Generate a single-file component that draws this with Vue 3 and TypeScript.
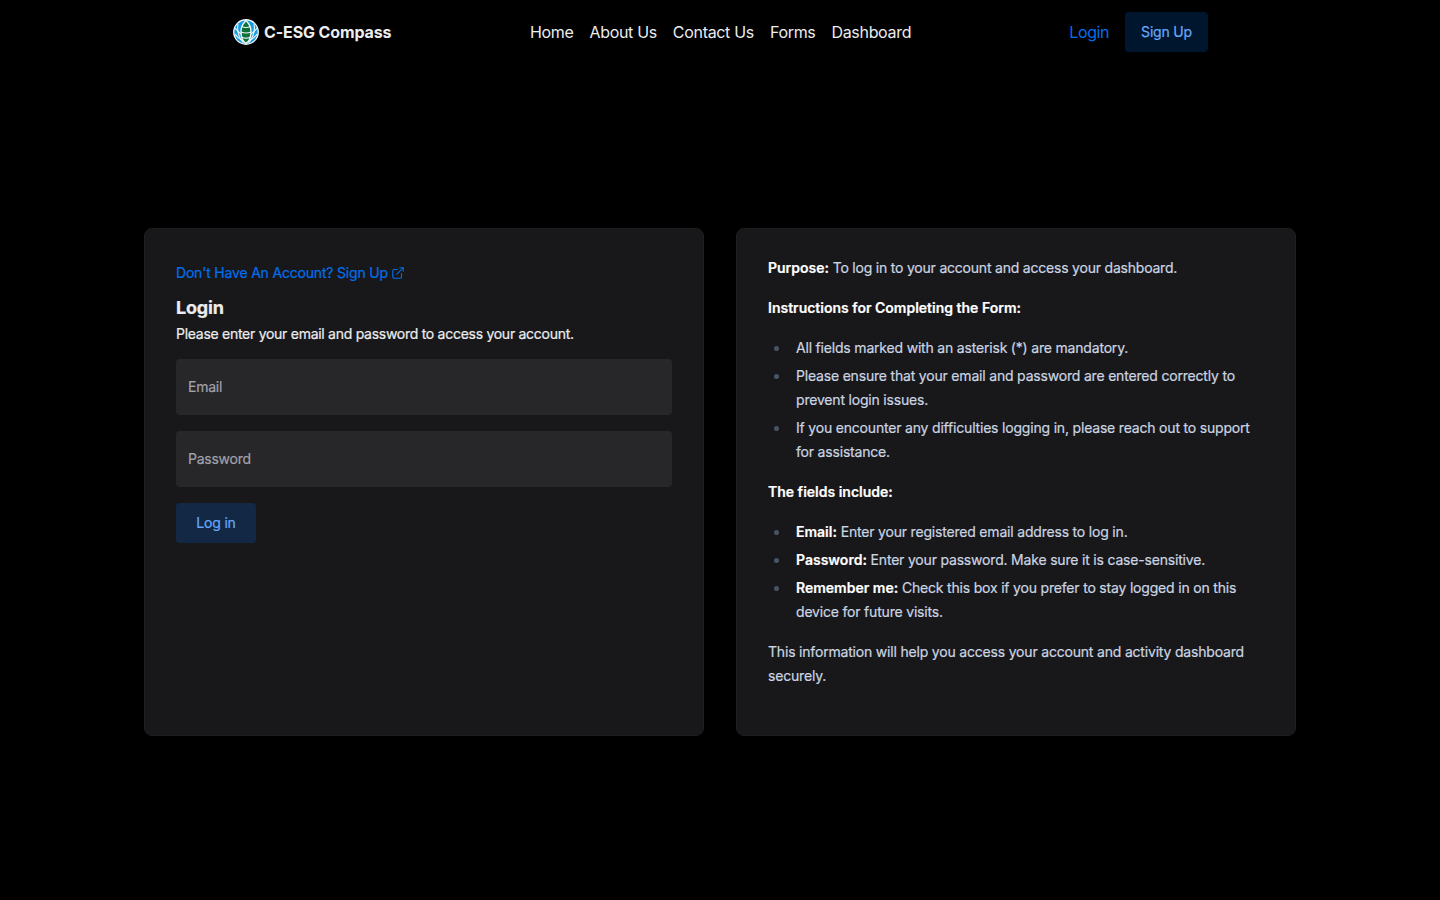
<script setup lang="ts">
import { ref } from 'vue'

interface Item {
  term?: string
  text: string
}

const links: string[] = ['Home', 'About Us', 'Contact Us', 'Forms', 'Dashboard']

const instructions: Item[] = [
  { text: 'All fields marked with an asterisk (*) are mandatory.' },
  { text: 'Please ensure that your email and password are entered correctly to prevent login issues.' },
  { text: 'If you encounter any difficulties logging in, please reach out to support for assistance.' },
]

const fields: Item[] = [
  { term: 'Email:', text: 'Enter your registered email address to log in.' },
  { term: 'Password:', text: 'Enter your password. Make sure it is case-sensitive.' },
  { term: 'Remember me:', text: 'Check this box if you prefer to stay logged in on this device for future visits.' },
]

const email = ref('')
const password = ref('')
</script>

<template>
  <div class="page">
    <nav class="nav">
      <header class="bar">
        <div class="brand">
          <svg class="logo" viewBox="0 0 26 26" aria-hidden="true">
            <circle cx="13" cy="13" r="12.9" fill="#f4f7f8" />
            <circle cx="13" cy="13" r="11.6" fill="#169be0" />
            <g fill="none" stroke="#f4f7f8" stroke-width="1.1">
              <path d="M1.5 8.5C4 12 6 14 9 15.4M24.5 8.5C22 12 20 14 17 15.4" />
              <path d="M2 15C4 18.2 7 20.4 10 21.5M24 15C22 18.2 19 20.4 16 21.5" />
              <path d="M5 5.2C3.8 11 5.3 17.5 10.5 24M21 5.2C22.2 11 20.7 17.5 15.5 24" />
            </g>
            <path
              d="M13 1.2C12 3.6 8 5.2 8 12.5C8 18 9.6 22.3 13 24.4C16.4 22.3 18 18 18 12.5C18 5.2 14 3.6 13 1.2Z"
              fill="#0b7138"
              stroke="#f4f7f8"
              stroke-width="1.3"
            />
            <path
              d="M8.5 7.6Q13 9.4 17.5 7.6M8 12.9Q13 15 18 12.9M8.8 18.2Q13 20 17.2 18.2"
              fill="none"
              stroke="#f4f7f8"
              stroke-width="1.1"
            />
          </svg>
          <p class="brand-name">C-ESG Compass</p>
        </div>
        <ul class="links">
          <li v-for="link in links" :key="link">{{ link }}</li>
        </ul>
        <div class="actions">
          <a class="login-link">Login</a>
          <a class="button signup">Sign Up</a>
        </div>
      </header>
    </nav>

    <main class="content">
      <section class="card form-card">
        <a class="account-link">
          Don't Have An Account? Sign Up
          <svg class="external" viewBox="0 0 24 24" aria-hidden="true">
            <path d="M18 13v6a2 2 0 0 1-2 2H5a2 2 0 0 1-2-2V8a2 2 0 0 1 2-2h6" />
            <path d="M15 3h6v6" />
            <path d="M10 14 21 3" />
          </svg>
        </a>
        <h1>Login</h1>
        <p class="lead">Please enter your email and password to access your account.</p>
        <form @submit.prevent>
          <input v-model="email" class="field" type="email" placeholder="Email" />
          <input v-model="password" class="field" type="password" placeholder="Password" />
          <button class="button submit" type="submit">Log in</button>
        </form>
      </section>

      <section class="card guide">
        <p class="purpose"><strong>Purpose:</strong> To log in to your account and access your dashboard.</p>
        <p><strong>Instructions for Completing the Form:</strong></p>
        <ul>
          <li v-for="item in instructions" :key="item.text">{{ item.text }}</li>
        </ul>
        <p><strong>The fields include:</strong></p>
        <ul>
          <li v-for="item in fields" :key="item.term">
            <strong>{{ item.term }}</strong> {{ item.text }}
          </li>
        </ul>
        <p>This information will help you access your account and activity dashboard securely.</p>
      </section>
    </main>
  </div>
</template>

<style>
body {
  margin: 0;
  background: #000;
}
</style>

<style scoped>
* {
  box-sizing: border-box;
}

.page {
  height: 900px;
  display: flex;
  flex-direction: column;
  overflow: hidden;
  background: #000;
  color: #ecedee;
  font-family: Inter, 'Liberation Sans', sans-serif;
  font-size: 16px;
  line-height: 24px;
  -webkit-font-smoothing: antialiased;
}

p,
h1,
ul {
  margin: 0;
  padding: 0;
}

.nav {
  flex: none;
  display: flex;
  justify-content: center;
  height: 64px;
}

.bar {
  display: flex;
  align-items: center;
  gap: 16px;
  width: 1024px;
  padding: 0 24px;
}

.brand,
.actions {
  flex: 1 0 0;
  display: flex;
  align-items: center;
}

.brand {
  gap: 5px;
  padding-left: 1px;
}

.logo {
  width: 26px;
  height: 26px;
}

.brand-name {
  font-weight: 700;
  letter-spacing: -0.13px;
  white-space: nowrap;
}

.links {
  display: flex;
  gap: 16px;
  list-style: none;
  letter-spacing: -0.32px;
  white-space: nowrap;
}

.actions {
  justify-content: flex-end;
  gap: 16px;
}

.login-link {
  letter-spacing: -0.4px;
}

.login-link,
.account-link {
  color: #006fee;
}

.button {
  display: inline-flex;
  align-items: center;
  justify-content: center;
  height: 40px;
  min-width: 80px;
  padding: 0 16px;
  border: 0;
  border-radius: 4px;
  font: 400 14px/20px Inter, 'Liberation Sans', sans-serif;
  letter-spacing: -0.18px;
  color: #66aaf9;
  -webkit-text-stroke: 0.2px currentColor;
}

.signup {
  background: #00162f;
}

.content {
  display: grid;
  grid-template-columns: 560px 560px;
  justify-content: center;
  gap: 32px;
  padding-top: 164px;
}

.card {
  height: 508px;
  padding: 31px;
  border: 1px solid #1e1e21;
  border-radius: 8px;
  background: #18181b;
  font-size: 14px;
  letter-spacing: -0.19px;
  -webkit-text-stroke: 0.2px currentColor;
}

.account-link {
  display: flex;
  align-items: center;
  gap: 3px;
  height: 20px;
  margin-top: 3px;
}

.external {
  width: 14px;
  height: 14px;
  fill: none;
  stroke: currentColor;
  stroke-width: 1.8;
  stroke-linecap: round;
  stroke-linejoin: round;
}

h1 {
  margin-top: 11px;
  font-size: 18px;
  line-height: 28px;
  font-weight: 700;
}

.lead {
  line-height: 20px;
  margin-top: 2px;
  letter-spacing: -0.275px;
}

form {
  display: flex;
  flex-direction: column;
  align-items: flex-start;
  gap: 16px;
  margin-top: 15px;
}

.field {
  width: 100%;
  height: 56px;
  padding: 0 12px 2px;
  border: 0;
  border-radius: 4px;
  outline: 0;
  background: #27272a;
  color: #ecedee;
  font: 400 14px/20px Inter, 'Liberation Sans', sans-serif;
  letter-spacing: -0.25px;
}

.field::placeholder {
  color: #a1a1aa;
  opacity: 1;
}

.submit {
  background: #132844;
}

.guide {
  padding-top: 27px;
  color: #cbd5e1;
}

.guide p {
  margin-bottom: 16px;
}

.guide .purpose {
  letter-spacing: -0.21px;
}

.guide strong {
  color: #fff;
  font-weight: 600;
  letter-spacing: 0;
}

.guide ul {
  margin-bottom: 16px;
  padding-left: 22px;
  list-style: disc;
}

.guide li {
  padding-left: 6px;
}

.guide li + li {
  margin-top: 4px;
}

.guide li::marker {
  color: #475569;
}
</style>
